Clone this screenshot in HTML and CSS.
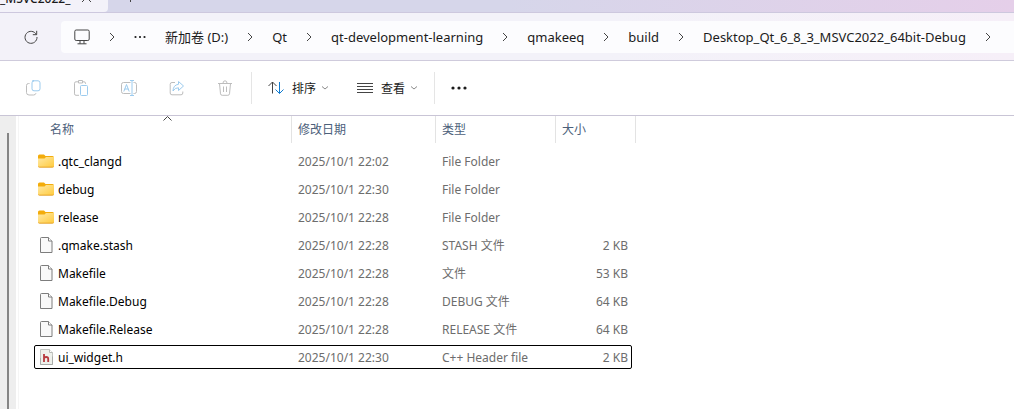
FILE: index.html
```html
<!DOCTYPE html>
<html lang="zh-CN">
<head>
    <meta charset="UTF-8">
    <meta name="viewport" content="width=device-width, initial-scale=1.0">
    <title>Desktop_Qt_6_8_3_MSVC2022_64bit-Debug</title>
    <link rel="stylesheet" href="styles.css">
</head>
<body>
    <svg class="symbols" aria-hidden="true">
        <symbol id="chevron" viewBox="0 0 6 10"><path d="M1 1l4 4-4 4"/></symbol>
        <symbol id="caret" viewBox="0 0 8 6"><path d="M1 1.5l3 2.5 3-2.5"/></symbol>
        <symbol id="folder" viewBox="0 0 16 16">
            <path d="M0 3q0-1.500 1.500-1.500h4.500l1.500 1.500h7q1.500 0 1.500 1.500v4h-16z" fill="#f3ac0b"/>
            <path d="M0 5.500h6.500l1.500-1.500h8v9q0 1-1 1h-14q-1 0-1-1z" fill="url(#folder-fill)"/>
            <path d="M.2 13.500q.3.700 1 .700h13.600q.7 0 1-.700" stroke="#e5a01f" fill="none"/>
        </symbol>
        <symbol id="file" viewBox="0 0 13 16">
            <path d="M1.500.5h7l3.500 3.500v11.500h-11.500v-14q0-1 1-1z" fill="#f9f9f9" stroke="#7d7d7d"/>
            <path d="M8.500.5v3.500h3.500" fill="#fff" stroke="#7d7d7d"/>
        </symbol>
        <symbol id="header-file" viewBox="0 0 13 16">
            <path d="M.5.5h9l3 3v12h-12z" fill="#eef1ec" stroke="#c3c6c2"/>
            <path d="M.5 9v6.500h12v-8" fill="none" stroke="#a9aca9"/>
            <path d="M9.500.5v3h3" fill="#fff" stroke="#b8bbb7"/>
            <path d="M4 5v8M4 9.500q0-1.500 2.200-1.500 2 0 2 1.800v3.200" fill="none" stroke="#b73a3f" stroke-width="1.800"/>
        </symbol>
        <linearGradient id="folder-fill" x1="0" y1="0" x2="1" y2="1">
            <stop offset="0" stop-color="#ffe9a6"/>
            <stop offset="1" stop-color="#ffcb3e"/>
        </linearGradient>
    </svg>

    <div class="tab-strip">
        <div class="tab">
            <span class="tab-title">_MSVC2022_</span>
            <button class="tab-close" aria-label="Close tab"><svg width="9" height="9" viewBox="0 0 9 9"><path d="M0 0l9 9M9 0l-9 9"/></svg></button>
        </div>
        <button class="tab-new" aria-label="New tab"><svg width="9" height="9" viewBox="0 0 9 9"><path d="M4.500 0v9M0 4.500h9"/></svg></button>
    </div>

    <div class="address-bar">
        <button class="refresh" aria-label="Refresh">
            <svg width="14" height="14" viewBox="0 0 14 14"><path d="M12.300 4.500A6 6 0 1 0 13 7M12.700.8v3.900h-3.900"/></svg>
        </button>
        <nav class="path" aria-label="Path">
            <svg class="monitor" width="16" height="16" viewBox="0 0 16 16"><path d="M2.200 1h11.600q1.400 0 1.400 1.400v7.700q0 1.400-1.400 1.400h-11.600q-1.400 0-1.400-1.400v-7.700q0-1.400 1.400-1.400zM3.500 14.800h9M6 11.700v3M10 11.700v3"/></svg>
            <svg class="chevron"><use href="#chevron"/></svg>
            <button class="dots" aria-label="More folders"><svg width="12" height="4" viewBox="0 0 12 4"><circle cx="1.500" cy="2" r="1.100"/><circle cx="6" cy="2" r="1.100"/><circle cx="10.500" cy="2" r="1.100"/></svg></button>
            <a href="#">新加卷 (D:)</a>
            <svg class="chevron"><use href="#chevron"/></svg>
            <a href="#">Qt</a>
            <svg class="chevron"><use href="#chevron"/></svg>
            <a href="#">qt-development-learning</a>
            <svg class="chevron"><use href="#chevron"/></svg>
            <a href="#">qmakeeq</a>
            <svg class="chevron"><use href="#chevron"/></svg>
            <a href="#">build</a>
            <svg class="chevron"><use href="#chevron"/></svg>
            <a href="#">Desktop_Qt_6_8_3_MSVC2022_64bit-Debug</a>
            <svg class="chevron"><use href="#chevron"/></svg>
        </nav>
    </div>

    <div class="toolbar">
        <div class="file-actions">
            <button disabled aria-label="Copy">
                <svg viewBox="0 0 16 16"><path class="blue" d="M7.500.8h5.500q2 0 2 2v6q0 2-2 2h-4q-2 0-2-2v-6q0-2 2-2z"/><path d="M4.500 3.500h-1q-2 0-2 2v7q0 2.500 2.500 2.500h4.500q2 0 2.500-1.800"/></svg>
            </button>
            <button disabled aria-label="Paste">
                <svg viewBox="0 0 16 16"><path d="M5 1.800h-2q-1.500 0-1.500 1.500v10.500q0 1.500 1.500 1.500h3M9.500 1.800h1.500q1.500 0 1.500 1.500v.7M5.500.5h4v2.500h-4z"/><rect class="blue" x="7.500" y="5.500" width="7" height="10" rx="1"/></svg>
            </button>
            <button disabled aria-label="Rename">
                <svg viewBox="0 0 16 16"><path d="M9.500 2.500h-7q-2 0-2 2v7q0 2 2 2h7M12.500 2.500h1q2 0 2 2v7q0 2-2 2h-1"/><path class="blue" d="M11 .5v15M9 .5h4M9 15.500h4M2.800 11.500l2.700-7 2.700 7M3.800 9h3.500"/></svg>
            </button>
            <button disabled aria-label="Share">
                <svg viewBox="0 0 16 16"><path d="M6 2.500h-3q-1.800 0-1.800 1.800v8.700q0 1.800 1.800 1.800h9q1.800 0 1.800-1.800v-1.500"/><path class="blue" d="M9.500 1.500l5 4.500-5 4.500v-2.700q-3.500-.3-5.500 3.200.2-6 5.500-6.700z"/></svg>
            </button>
            <button disabled aria-label="Delete">
                <svg viewBox="0 0 16 16"><path d="M1 3.500h14M2.500 3.500l1 10.300q.2 1.500 1.700 1.500h5.600q1.500 0 1.700-1.500l1-10.300M6 3.200q0-2.400 2-2.400t2 2.400M6.500 6.500v5.500M9.500 6.500v5.500"/></svg>
            </button>
        </div>
        <div class="view-actions">
            <button>
                <svg class="icon" viewBox="0 0 16 16"><path d="M4.500 13.500v-11.500M.5 6l4-4 4 4"/><path class="blue" d="M11.500 2v11.500M7.500 9.500l4 4 4-4"/></svg>
                <span>排序</span>
                <svg class="caret"><use href="#caret"/></svg>
            </button>
            <button>
                <svg class="icon" viewBox="0 0 16 16"><path d="M0 3.500h16M0 6.500h16M0 9.500h16M0 12.500h16"/></svg>
                <span>查看</span>
                <svg class="caret"><use href="#caret"/></svg>
            </button>
        </div>
        <button class="more" aria-label="See more">
            <svg width="16" height="4" viewBox="0 0 16 4"><circle cx="2" cy="2" r="1.600"/><circle cx="8" cy="2" r="1.600"/><circle cx="14" cy="2" r="1.600"/></svg>
        </button>
    </div>

    <div class="content">
        <div class="side-pane"><div class="scroll-thumb"></div></div>
        <main class="file-list">
            <table>
                <colgroup>
                    <col class="col-name"><col class="col-date"><col class="col-type"><col class="col-size">
                </colgroup>
                <thead>
                    <tr>
                        <th class="sorted">名称<svg class="sort-mark" width="9" height="5" viewBox="0 0 9 5"><path d="M.5 4.500l4-4 4 4"/></svg></th>
                        <th>修改日期</th>
                        <th>类型</th>
                        <th>大小</th>
                    </tr>
                </thead>
                <tbody>
                    <tr>
                        <td><svg class="folder"><use href="#folder"/></svg>.qtc_clangd</td>
                        <td>2025/10/1 22:02</td>
                        <td>File Folder</td>
                        <td></td>
                    </tr>
                    <tr>
                        <td><svg class="folder"><use href="#folder"/></svg>debug</td>
                        <td>2025/10/1 22:30</td>
                        <td>File Folder</td>
                        <td></td>
                    </tr>
                    <tr>
                        <td><svg class="folder"><use href="#folder"/></svg>release</td>
                        <td>2025/10/1 22:28</td>
                        <td>File Folder</td>
                        <td></td>
                    </tr>
                    <tr>
                        <td><svg class="file"><use href="#file"/></svg>.qmake.stash</td>
                        <td>2025/10/1 22:28</td>
                        <td>STASH 文件</td>
                        <td>2 KB</td>
                    </tr>
                    <tr>
                        <td><svg class="file"><use href="#file"/></svg>Makefile</td>
                        <td>2025/10/1 22:28</td>
                        <td>文件</td>
                        <td>53 KB</td>
                    </tr>
                    <tr>
                        <td><svg class="file"><use href="#file"/></svg>Makefile.Debug</td>
                        <td>2025/10/1 22:28</td>
                        <td>DEBUG 文件</td>
                        <td>64 KB</td>
                    </tr>
                    <tr>
                        <td><svg class="file"><use href="#file"/></svg>Makefile.Release</td>
                        <td>2025/10/1 22:28</td>
                        <td>RELEASE 文件</td>
                        <td>64 KB</td>
                    </tr>
                    <tr class="focused">
                        <td><svg class="file"><use href="#header-file"/></svg>ui_widget.h</td>
                        <td>2025/10/1 22:30</td>
                        <td>C++ Header file</td>
                        <td>2 KB</td>
                    </tr>
                </tbody>
            </table>
        </main>
    </div>
</body>
</html>
```
FILE: styles.css
```css
* {
    box-sizing: border-box;
}
body {
    display: flex;
    flex-direction: column;
    height: 100vh;
    margin: 0;
    overflow: hidden;
    background-color: #fff;
    color: #1b1b1b;
    font-family: "Noto Sans", "Noto Sans CJK SC", sans-serif;
    font-size: 12px;
}
button {
    display: flex;
    align-items: center;
    padding: 0;
    border: none;
    background: none;
    color: inherit;
    font: inherit;
}
svg {
    flex: none;
    fill: none;
    stroke: #444;
}
.symbols {
    position: absolute;
    width: 0;
    height: 0;
}

/* Tabs */
.tab-strip {
    display: flex;
    align-items: flex-end;
    height: 13px;
    flex: none;
    overflow: hidden;
    background: linear-gradient(90deg, #d6d6ea 50%, #e5cfe9);
    border-bottom: 1px solid #cdc8de;
}
.tab {
    display: flex;
    align-items: flex-end;
    width: 108px;
    height: 12px;
    background-color: #f3f2f9;
    border-bottom-right-radius: 4px;
}
.tab-title {
    width: 82px;
    line-height: 16px;
    padding-bottom: 5px;
    font-weight: 500;
}
.tab-close, .tab-new {
    padding-bottom: 10px;
}
.tab-new {
    margin-left: 18px;
}

/* Address bar */
.address-bar {
    display: flex;
    align-items: center;
    height: 48px;
    flex: none;
    background: linear-gradient(90deg, #f3f2f9 60%, #f6eff8);
    border-bottom: 1px solid #cfcbdc;
}
.refresh {
    width: 61px;
    justify-content: center;
}
.path {
    display: flex;
    align-items: center;
    flex: 1;
    gap: 19px;
    height: 32px;
    padding-left: 13px;
    overflow: hidden;
    background-color: #fcfcfe;
    border-radius: 4px 0 0 4px;
    font-size: 13px;
    white-space: nowrap;
}
.path a {
    color: inherit;
    text-decoration: none;
}
.chevron {
    width: 6px;
    height: 10px;
}
.dots svg, .more svg {
    fill: #1b1b1b;
    stroke: none;
}

/* Toolbar */
.toolbar {
    display: flex;
    align-items: center;
    height: 55px;
    flex: none;
    border-bottom: 1px solid #c9c5d6;
}
.file-actions, .view-actions {
    display: flex;
    align-items: center;
    height: 32px;
    border-right: 1px solid #e5e5e5;
}
.file-actions {
    gap: 32px;
    padding: 0 18px 0 25px;
}
.file-actions svg {
    width: 16px;
    height: 16px;
    stroke: #bdbdbd;
}
.file-actions .blue {
    stroke: #9ccbee;
}
.view-actions {
    gap: 28px;
    padding: 0 16px;
}
.view-actions .icon {
    width: 16px;
    height: 16px;
    margin-right: 8px;
}
.view-actions .blue {
    stroke: #0f7bd0;
}
.caret {
    width: 8px;
    height: 6px;
    margin-left: 5px;
    stroke: #8a8a8a;
}
.more {
    margin-left: 16px;
}

/* File list */
.content {
    display: flex;
    flex: 1;
    min-height: 0;
}
.side-pane {
    width: 16px;
    padding: 17px 0 0 7px;
    background-color: #eee;
}
.scroll-thumb {
    width: 2px;
    height: 100%;
    background-color: #858585;
}
.file-list {
    flex: 1;
    margin-left: 2px;
    padding-left: 15px;
    border-left: 1px solid #f5f5f5;
}
table {
    width: 602px;
    table-layout: fixed;
    border-collapse: separate;
    border-spacing: 0;
}
.col-name {
    width: 258px;
}
.col-date {
    width: 144px;
}
.col-type {
    width: 120px;
}
.col-size {
    width: 80px;
}
th {
    height: 27px;
    padding: 0 6px 2px;
    border-right: 1px solid #e3e3e3;
    color: #4c607a;
    font-weight: 400;
    text-align: left;
}
th.sorted {
    position: relative;
    padding-left: 16px;
}
.sort-mark {
    position: absolute;
    top: 0;
    left: 50%;
}
tbody::before {
    content: "";
    display: table-row;
    height: 4px;
}
td {
    height: 28px;
    padding: 0 6px;
    color: #6d6d6d;
    white-space: nowrap;
}
td:first-child {
    padding-left: 4px;
    color: #000;
}
td:last-child {
    padding-right: 8px;
    text-align: right;
}
td svg {
    margin-right: 4px;
    vertical-align: -3px;
    stroke: none;
}
.folder {
    width: 16px;
    height: 16px;
}
.file {
    width: 13px;
    height: 16px;
    margin-left: 2px;
    margin-right: 5px;
}
.focused {
    position: relative;
}
.focused::after {
    content: "";
    position: absolute;
    inset: 2px 4px 2px 0;
    border: 1px solid #000;
    border-radius: 2px;
}
```
